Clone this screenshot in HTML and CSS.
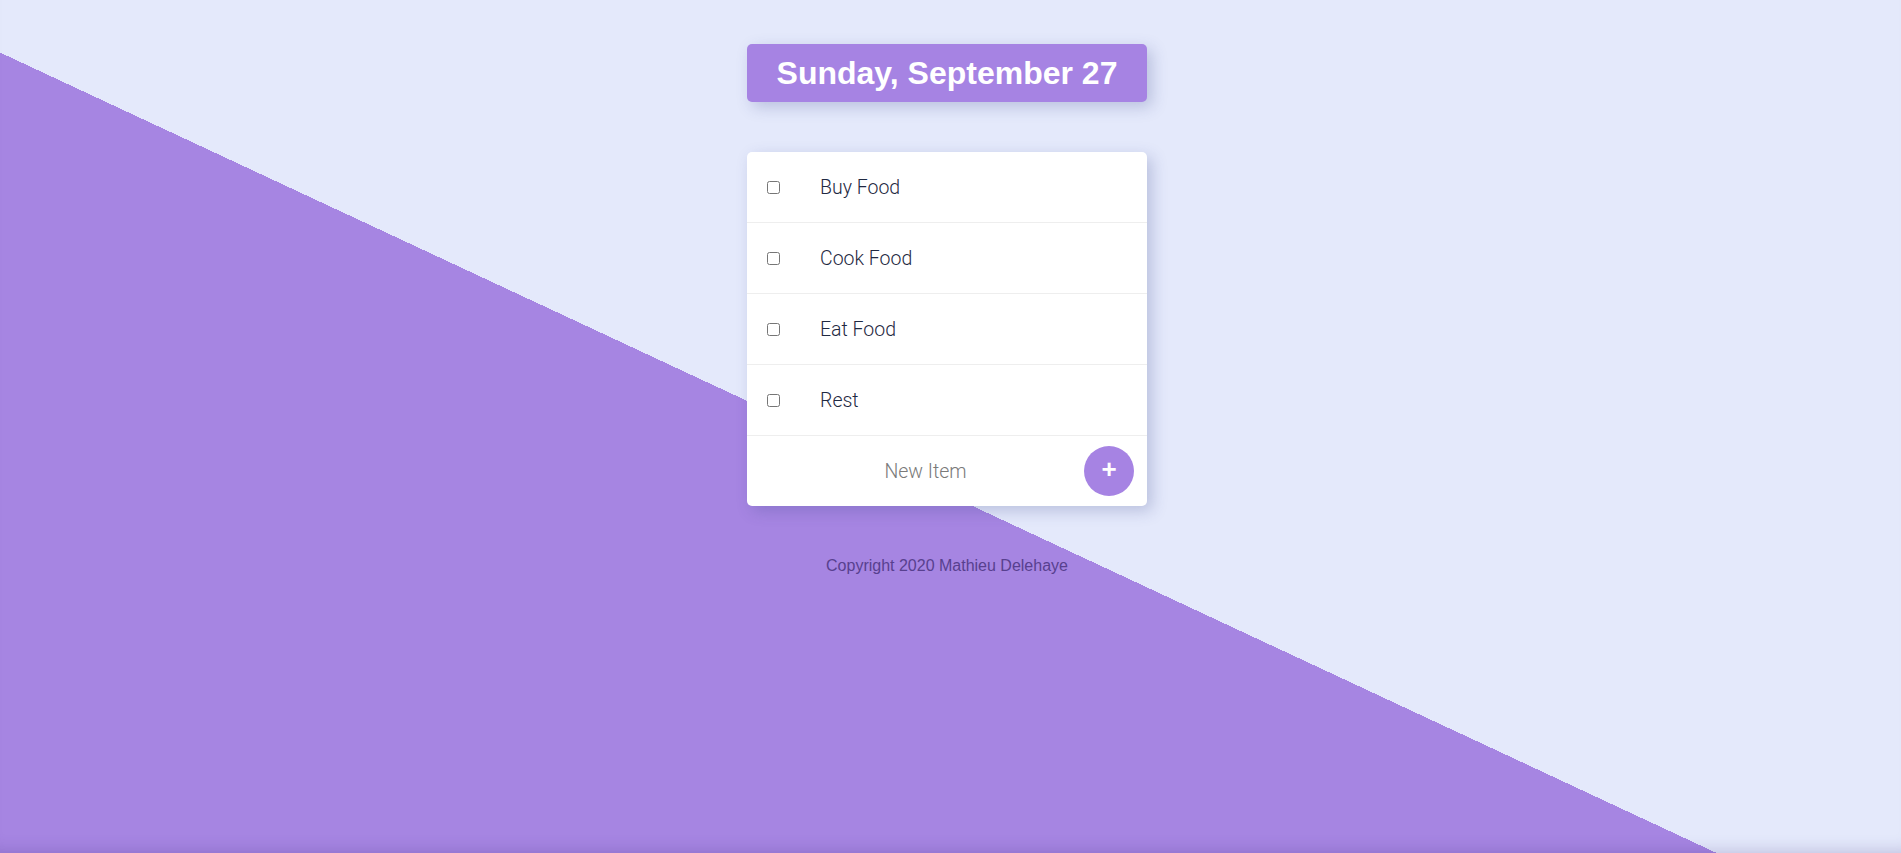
FILE: index.html
```html
<!DOCTYPE html>
<html lang="en">
<head>
<meta charset="utf-8">
<title>To-Do List</title>
<link rel="stylesheet" href="styles.css">
</head>
<body>
<div class="page">
  <div class="heading">
    <h1 class="heading-title">Sunday, September 27</h1>
  </div>
  <div class="box">
    <div class="item">
      <input class="check" type="checkbox">
      <p class="item-text">Buy Food</p>
    </div>
    <div class="item">
      <input class="check" type="checkbox">
      <p class="item-text">Cook Food</p>
    </div>
    <div class="item">
      <input class="check" type="checkbox">
      <p class="item-text">Eat Food</p>
    </div>
    <div class="item">
      <input class="check" type="checkbox">
      <p class="item-text">Rest</p>
    </div>
    <form class="item-form">
      <input class="new-item" type="text" placeholder="New Item" autocomplete="off">
      <button class="add-btn" type="button">+</button>
    </form>
  </div>
  <footer class="footer">Copyright 2020 Mathieu Delehaye</footer>
</div>
</body>
</html>
```
FILE: styles.css
```css
html, body {
  margin: 0;
  padding: 0;
}

body {
  font-family: "Liberation Sans", Arial, sans-serif;
  background: #e4e9fb;
}

.page {
  min-height: 853px;
  box-sizing: border-box;
  display: flex;
  flex-direction: column;
  align-items: center;
  padding: 44px 7px 0 0;
  background: linear-gradient(205deg, #e4e9fb 851px, #a685e2 851px);
  box-shadow: inset 0 -16px 16px -14px rgba(60, 40, 120, 0.22);
}

.heading {
  width: 400px;
  height: 58px;
  box-sizing: border-box;
  background: #a683e3;
  border-radius: 5px;
  box-shadow: 5px 5px 15px rgba(60, 70, 140, 0.25);
  display: flex;
  align-items: center;
  justify-content: center;
}

.heading-title {
  margin: 0;
  color: #fff;
  font-family: "Liberation Sans", Arial, sans-serif;
  font-weight: bold;
  font-size: 32px;
  line-height: 1;
}

.box {
  margin-top: 50px;
  width: 400px;
  background: #fff;
  border-radius: 5px;
  box-shadow: 5px 5px 15px rgba(60, 70, 140, 0.25);
}

.item {
  height: 70px;
  border-bottom: 1px solid #eeeeee;
  display: flex;
  align-items: center;
  padding-left: 20px;
}

.check {
  margin: 0;
  width: 13px;
  height: 13px;
}

.item-text {
  margin: 0 0 0 40px;
  font-family: Roboto, "Liberation Sans", sans-serif;
  font-weight: 300;
  font-size: 19.5px;
  color: #1f2942;
}

.item-form {
  height: 70px;
  margin: 0;
  display: flex;
  align-items: center;
  padding: 0 13px 0 20px;
}

.new-item {
  flex: 1;
  min-width: 0;
  border: none;
  outline: none;
  background: transparent;
  text-align: center;
  font-family: Roboto, "Liberation Sans", sans-serif;
  font-weight: 300;
  font-size: 19.5px;
  padding: 0;
  height: 40px;
}

.new-item::placeholder {
  color: #7a7a7a;
}

.add-btn {
  width: 50px;
  height: 50px;
  border-radius: 50%;
  border: none;
  background: #a683e3;
  color: #fff;
  font-family: "Liberation Sans", Arial, sans-serif;
  font-weight: bold;
  font-size: 26px;
  line-height: 1;
  padding: 0 0 4px 0;
  display: flex;
  align-items: center;
  justify-content: center;
}

.footer {
  margin-top: 51px;
  font-family: "Liberation Sans", Arial, sans-serif;
  font-size: 16px;
  color: #58408f;
}
```
